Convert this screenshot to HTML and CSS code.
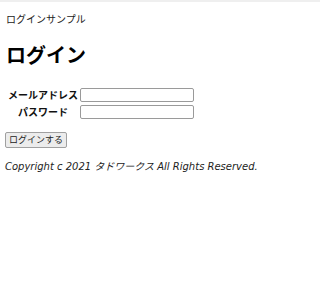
FILE: index.html
```html
<!DOCTYPE html>
<html lang="ja">
<head>
<meta charset="utf-8">
<title>ログイン</title>
<link rel="stylesheet" href="styles.css">
</head>
<body>
<div class="topbar"></div>
<main class="page">
  <p class="site-title">ログインサンプル</p>
  <h1 class="heading">ログイン</h1>
  <form class="login-form">
    <table class="fields">
      <tr>
        <th>メールアドレス</th>
        <td><input type="text" class="field"></td>
      </tr>
      <tr>
        <th>パスワード</th>
        <td><input type="password" class="field"></td>
      </tr>
    </table>
    <button type="button" class="submit">ログインする</button>
  </form>
  <p class="copyright">Copyright c 2021 タドワークス All Rights Reserved.</p>
</main>
</body>
</html>
```
FILE: styles.css
```css
html, body {
  margin: 0;
  padding: 0;
  background: #ffffff;
}
body {
  font-family: "DejaVu Sans", "Noto Sans CJK JP", sans-serif;
  font-size: 10px;
  color: #111;
}
.topbar {
  height: 2px;
  background: #efefef;
}
.page {
  padding: 0 5px;
}
.site-title {
  margin: 9px 0 0 1px;
  font-family: "Noto Sans CJK JP", sans-serif;
  font-size: 10px;
  line-height: 15px;
  color: #222;
}
.heading {
  margin: 16px 0 0 1px;
  font-family: "Noto Sans CJK JP", sans-serif;
  font-size: 20px;
  line-height: 26px;
  font-weight: bold;
  color: #000;
}
.login-form {
  margin-top: 17px;
}
.fields {
  border-collapse: separate;
  border-spacing: 1px 3px;
  margin-left: 0;
}
.fields th {
  font-family: "Noto Sans CJK JP", sans-serif;
  font-size: 10px;
  font-weight: bold;
  text-align: center;
  padding: 0 1px 0 2px;
  line-height: 14px;
}
.fields td {
  padding: 0;
}
.field {
  display: block;
  width: 108px;
  height: 10px;
  padding: 1px 2px;
  border: 1px solid #9a9a9a;
  border-radius: 2px;
  margin: 0;
  font-size: 10px;
}
.submit {
  margin-top: 10px;
  padding: 1px 3px;
  height: 16px;
  font-family: "Noto Sans CJK JP", sans-serif;
  font-size: 9px;
  line-height: 12px;
  color: #222;
  background: #ececec;
  border: 1px solid #a0a0a0;
  border-radius: 2px;
}
.copyright {
  margin: 12px 0 0 0;
  font-family: "DejaVu Sans", "Noto Sans CJK JP", sans-serif;
  font-style: italic;
  font-size: 10px;
  line-height: 14px;
  color: #222;
}
```
